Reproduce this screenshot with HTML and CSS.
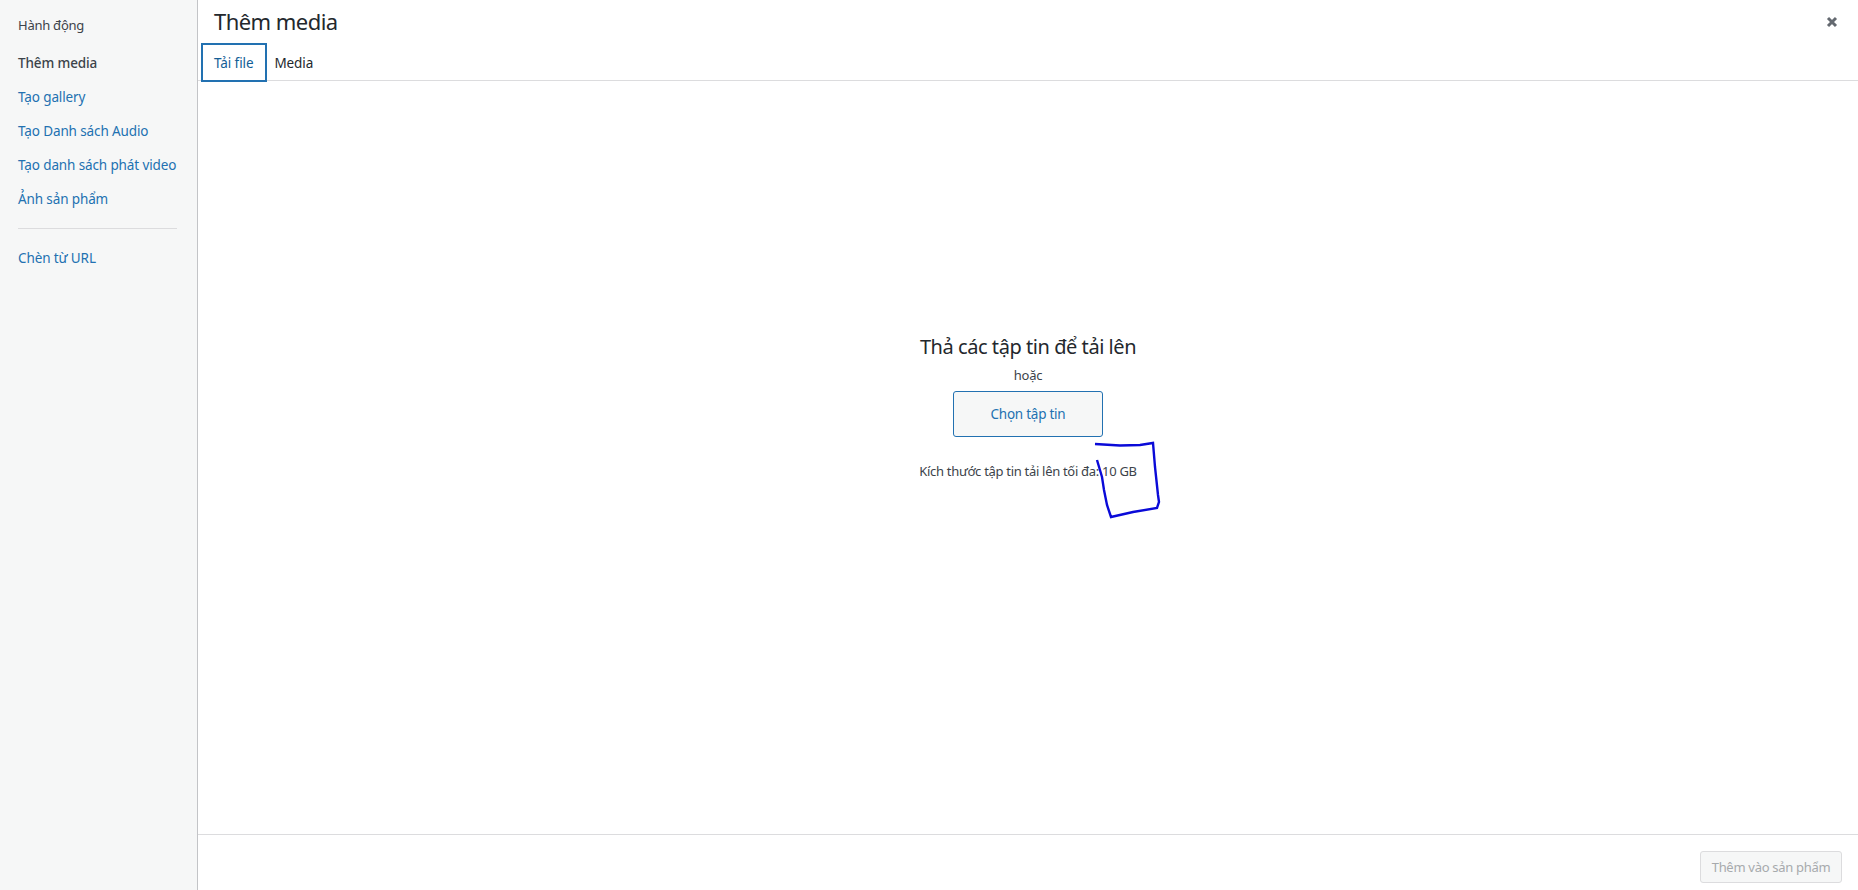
FILE: index.html
```html
<!DOCTYPE html>
<html lang="vi">
<head>
    <meta charset="UTF-8">
    <meta name="viewport" content="width=device-width, initial-scale=1.0">
    <title>Thêm media</title>
    <link rel="stylesheet" href="styles.css">
</head>
<body>
    <div class="modal">
        <aside class="menu">
            <h2 class="menu-title">Hành động</h2>
            <a class="menu-item active">Thêm media</a>
            <a class="menu-item">Tạo gallery</a>
            <a class="menu-item">Tạo Danh sách Audio</a>
            <a class="menu-item">Tạo danh sách phát video</a>
            <a class="menu-item">Ảnh sản phẩm</a>
            <div class="separator"></div>
            <a class="menu-item">Chèn từ URL</a>
        </aside>
        <main class="frame">
            <header class="frame-head">
                <div class="title-row">
                    <h1>Thêm media</h1>
                    <svg class="close" viewBox="0 0 12 12" width="12" height="12">
                        <path d="M2 2l8 8M10 2l-8 8" stroke="#646970" stroke-width="3" fill="none"/>
                    </svg>
                </div>
                <nav class="tabs">
                    <a class="tab current">Tải file</a>
                    <a class="tab">Media</a>
                </nav>
            </header>
            <section class="uploader">
                <h2>Thả các tập tin để tải lên</h2>
                <p class="or">hoặc</p>
                <button class="select-btn" type="button">Chọn tập tin</button>
                <p class="max-size">Kích thước tập tin tải lên tối đa: 10 GB</p>
            </section>
            <footer class="toolbar">
                <button class="insert-btn" type="button" disabled>Thêm vào sản phẩm</button>
            </footer>
        </main>
    </div>
    <svg class="scribble" width="1858" height="890" viewBox="0 0 1858 890">
        <path d="M1095 444 L1120 445.5 L1140 445 L1153 443 L1155 467 L1158 495 L1159 502 L1157 508 L1133 512 L1111 517 L1107 505 L1104 490 L1102 477 L1097 460" fill="none" stroke="#0a0ad8" stroke-width="2.4"/>
    </svg>
</body>
</html>
```

FILE: styles.css
```css
* {
    box-sizing: border-box;
}

html, body {
    height: 100%;
}

body {
    margin: 0;
    font-family: "Noto Sans", "Open Sans", sans-serif;
    font-size: 13px;
    color: #3c434a;
    background-color: #fff;
    overflow: hidden;
}

.modal {
    display: flex;
    height: 890px;
}

.menu {
    width: 198px;
    flex-shrink: 0;
    padding: 16px 0 0 18px;
    background-color: #f6f7f7;
    border-right: 1px solid #c3c4c7;
}

.menu-title {
    margin: 0 0 12px;
    font-size: 13px;
    font-weight: 400;
    line-height: 18px;
    color: #3c434a;
    letter-spacing: -0.25px;
}

.menu-item {
    display: block;
    padding: 8px 0;
    font-size: 13.5px;
    line-height: 18px;
    color: #2271b1;
    letter-spacing: -0.12px;
    white-space: nowrap;
}

.menu-item.active {
    color: #3c434a;
    font-weight: 500;
}

.separator {
    width: 159px;
    height: 1px;
    margin: 12px 0 12px;
    background-color: #dcdcde;
}

.frame {
    flex: 1;
    display: flex;
    flex-direction: column;
    min-width: 0;
}

.frame-head {
    height: 81px;
    border-bottom: 1px solid #dcdcde;
}

.title-row {
    display: flex;
    justify-content: space-between;
    align-items: center;
    height: 43px;
    padding: 0 20px 2px 16px;
}

h1 {
    margin: 0;
    font-size: 22px;
    font-weight: 400;
    color: #23282d;
    letter-spacing: -0.55px;
}

.close {
    margin-top: 2px;
}

.tabs {
    display: flex;
    padding-left: 3px;
}

.tab {
    padding: 0 13px;
    height: 39px;
    line-height: 41px;
    font-size: 13.5px;
    color: #23282d;
    letter-spacing: -0.1px;
}

.tab.current {
    padding: 0 12px 0 11px;
    line-height: 37px;
    color: #135e96;
    border: 2px solid #2271b1;
}

.tab + .tab {
    padding-left: 7px;
}

.uploader {
    flex: 1;
    display: flex;
    flex-direction: column;
    align-items: center;
    padding-top: 252px;
}

.uploader h2 {
    margin: 0;
    font-size: 20px;
    font-weight: 400;
    line-height: 28px;
    color: #23282d;
    letter-spacing: -0.45px;
}

.or {
    margin: 5px 0 7px;
    font-size: 13px;
    line-height: 18px;
    color: #3c434a;
    letter-spacing: -0.25px;
}

.select-btn {
    width: 150px;
    height: 46px;
    padding: 0;
    font-family: inherit;
    font-size: 13.5px;
    color: #2271b1;
    letter-spacing: -0.25px;
    background-color: #f6f7f7;
    border: 1px solid #2271b1;
    border-radius: 3px;
}

.max-size {
    margin: 25px 0 0;
    font-size: 13px;
    line-height: 18px;
    color: #3c434a;
    letter-spacing: -0.3px;
}

.toolbar {
    display: flex;
    justify-content: flex-end;
    align-items: flex-start;
    height: 56px;
    padding: 16px 16px 0 0;
    border-top: 1px solid #dcdcde;
}

.insert-btn {
    width: 142px;
    height: 32px;
    padding: 0;
    font-family: inherit;
    font-size: 13px;
    color: #a7aaad;
    letter-spacing: -0.3px;
    background-color: #f6f7f7;
    border: 1px solid #dcdcde;
    border-radius: 3px;
}

.scribble {
    position: absolute;
    top: 0;
    left: 0;
    pointer-events: none;
}
```
